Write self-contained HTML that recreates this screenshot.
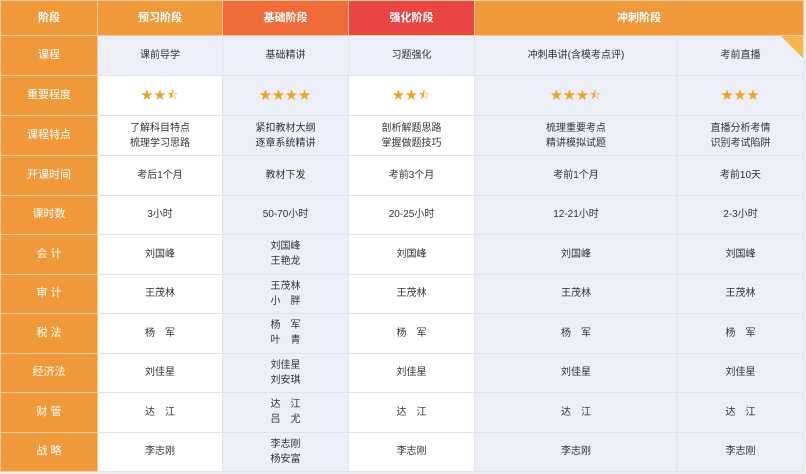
<!DOCTYPE html><html><head><meta charset="utf-8"><style>
body{margin:0;width:806px;height:474px;background:#eceef3;overflow:hidden;font-family:"Liberation Sans","Noto Sans CJK SC",sans-serif}
table{position:absolute;left:0;top:0;border-collapse:collapse;table-layout:fixed;width:803px}
td{border:1px solid #e2e4ea;text-align:center;font-size:10px;color:#333;padding:0;line-height:15px}
td.l{background:#f0993a;color:#fff;font-size:11px;border-color:#f6c99a}
tr.h td{color:#fff;font-size:11px;font-weight:bold;border-color:#f6c99a}
.w{background:#fff}.b{background:#eceff7}
.s{color:#f0a022;font-size:12px;letter-spacing:1px}
tr{height:39.5px}
</style></head><body>
<table>
<colgroup><col style="width:97px"><col style="width:125px"><col style="width:126px"><col style="width:126px"><col style="width:203px"><col style="width:126px"></colgroup>
<tr class="h" style="height:35px"><td style="background:#f0993a">阶段</td><td style="background:#f0993a">预习阶段</td><td style="background:#f06b3a">基础阶段</td><td style="background:#e94545">强化阶段</td><td colspan="2" style="background:#f0993a">冲刺阶段</td></tr>
<tr style="height:40px"><td class="l">课程</td><td class="b">课前导学</td><td class="b">基础精讲</td><td class="b">习题强化</td><td class="b">冲刺串讲(含模考点评)</td><td class="b" style="position:relative">考前直播<div style="position:absolute;right:0;top:0;width:0;height:0;border-top:22px solid #f5b54a;border-left:22px solid transparent"></div></td></tr>
<tr style="height:40px"><td class="l">重要程度</td><td class="w s">★★⯪</td><td class="b s">★★★★</td><td class="w s">★★⯪</td><td class="b s">★★★⯪</td><td class="b s">★★★</td></tr>
<tr style="height:40px"><td class="l">课程特点</td><td class="w">了解科目特点<br>梳理学习思路</td><td class="b">紧扣教材大纲<br>逐章系统精讲</td><td class="w">剖析解题思路<br>掌握做题技巧</td><td class="b">梳理重要考点<br>精讲模拟试题</td><td class="b">直播分析考情<br>识别考试陷阱</td></tr>
<tr><td class="l">开课时间</td><td class="w">考后1个月</td><td class="b">教材下发</td><td class="w">考前3个月</td><td class="b">考前1个月</td><td class="b">考前10天</td></tr>
<tr><td class="l">课时数</td><td class="w">3小时</td><td class="b">50-70小时</td><td class="w">20-25小时</td><td class="b">12-21小时</td><td class="b">2-3小时</td></tr>
<tr><td class="l">会 计</td><td class="w">刘国峰</td><td class="b">刘国峰<br>王艳龙</td><td class="w">刘国峰</td><td class="b">刘国峰</td><td class="b">刘国峰</td></tr>
<tr><td class="l">审 计</td><td class="w">王茂林</td><td class="b">王茂林<br>小　胖</td><td class="w">王茂林</td><td class="b">王茂林</td><td class="b">王茂林</td></tr>
<tr><td class="l">税 法</td><td class="w">杨　军</td><td class="b">杨　军<br>叶　青</td><td class="w">杨　军</td><td class="b">杨　军</td><td class="b">杨　军</td></tr>
<tr><td class="l">经济法</td><td class="w">刘佳星</td><td class="b">刘佳星<br>刘安琪</td><td class="w">刘佳星</td><td class="b">刘佳星</td><td class="b">刘佳星</td></tr>
<tr><td class="l">财 管</td><td class="w">达　江</td><td class="b">达　江<br>吕　尤</td><td class="w">达　江</td><td class="b">达　江</td><td class="b">达　江</td></tr>
<tr><td class="l">战 略</td><td class="w">李志刚</td><td class="b">李志刚<br>杨安富</td><td class="w">李志刚</td><td class="b">李志刚</td><td class="b">李志刚</td></tr>
</table>
</body></html>
